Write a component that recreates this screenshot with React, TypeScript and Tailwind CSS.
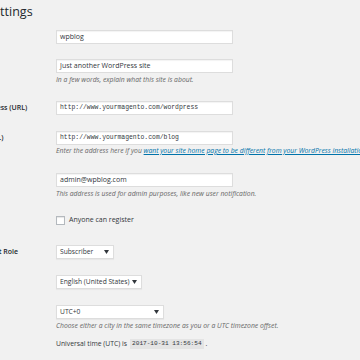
import React from "react";

const font = { fontFamily: '"Open Sans", "Noto Sans", sans-serif' };

function Arrow() {
  return (
    <svg width="5" height="4" viewBox="0 0 5 4" className="shrink-0">
      <path d="M0 0 L5 0 L2.5 4 Z" fill="#32373c" />
    </svg>
  );
}

function Label({ text, h = 14 }: { text: string; h?: number }) {
  return (
    <div
      className="w-[114px] shrink-0 flex items-center text-[7px] font-semibold text-[#23282d] whitespace-nowrap overflow-hidden"
      style={{ height: h }}
    >
      {text}
    </div>
  );
}

function TextInput({ value, mono = false }: { value: string; mono?: boolean }) {
  return (
    <div className="w-[177px] h-[14px] bg-white border border-[#dddddd] shadow-[inset_0_1px_1px_rgba(0,0,0,0.05)] flex items-center pl-[3px] overflow-hidden whitespace-nowrap">
      {mono ? (
        <span className="text-[6.4px] text-[#32373c]" style={{ fontFamily: '"Liberation Mono", "DejaVu Sans Mono", monospace' }}>
          {value}
        </span>
      ) : (
        <span className="text-[7px] text-[#32373c]">{value}</span>
      )}
    </div>
  );
}

function Select({ value, w }: { value: string; w: number }) {
  return (
    <div
      className="h-[14px] bg-white border border-[#dddddd] shadow-[0_1px_1px_rgba(0,0,0,0.04)] flex items-center justify-between pl-[3px] pr-[4px] whitespace-nowrap"
      style={{ width: w }}
    >
      <span className="text-[6.7px] text-[#32373c]">{value}</span>
      <Arrow />
    </div>
  );
}

function Desc({ children, mt = 3 }: { children: React.ReactNode; mt?: number }) {
  return (
    <div className="text-[6.8px] leading-[8px] italic text-[#666666] whitespace-nowrap" style={{ marginTop: mt }}>
      {children}
    </div>
  );
}

export default function App() {
  return (
    <div className="w-[360px] h-[360px] overflow-hidden bg-[#f1f1f1]" style={font}>
      <div className="ml-[-58px] w-[430px]">
        <h1 className="ml-[-5px] pt-[3px] h-[17px] text-[12.5px] leading-[17px] text-[#23282d] whitespace-nowrap">
          General Settings
        </h1>

        <div className="flex mt-[13px]">
          <Label text="Site Title" />
          <TextInput value="wpblog" />
        </div>

        <div className="flex mt-[15px]">
          <Label text="Tagline" />
          <div>
            <TextInput value="Just another WordPress site" />
            <Desc>In a few words, explain what this site is about.</Desc>
          </div>
        </div>

        <div className="flex mt-[17px]">
          <Label text="WordPress Address (URL)" />
          <TextInput value="http://www.yourmagento.com/wordpress" mono />
        </div>

        <div className="flex mt-[16px]">
          <Label text="Site Address (URL)" />
          <div>
            <TextInput value="http://www.yourmagento.com/blog" mono />
            <Desc mt={2}>
              Enter the address here if you{" "}
              <span className="text-[#0073aa] underline">
                want your site home page to be different from your WordPress installation
              </span>
              .
            </Desc>
          </div>
        </div>

        <div className="flex mt-[18px]">
          <Label text="Email Address" />
          <div>
            <TextInput value="admin@wpblog.com" />
            <Desc>This address is used for admin purposes, like new user notification.</Desc>
          </div>
        </div>

        <div className="flex mt-[18px]">
          <Label text="Membership" h={9} />
          <div className="flex items-center h-[9px]">
            <div className="w-[9px] h-[9px] bg-white border border-[#b4b9be] shadow-[inset_0_1px_1px_rgba(0,0,0,0.1)]" />
            <span className="ml-[4px] text-[7px] text-[#32373c]">Anyone can register</span>
          </div>
        </div>

        <div className="flex mt-[20px]">
          <Label text="New User Default Role" />
          <Select value="Subscriber" w={58} />
        </div>

        <div className="flex mt-[16px]">
          <Label text="Site Language" />
          <Select value="English (United States)" w={86} />
        </div>

        <div className="flex mt-[16px]">
          <Label text="Timezone" />
          <div>
            <Select value="UTC+0" w={108} />
            <Desc>Choose either a city in the same timezone as you or a UTC timezone offset.</Desc>
            <div className="mt-[9px] flex items-center h-[10px] text-[6.8px] text-[#32373c] whitespace-nowrap">
              <span>Universal time (UTC) is</span>
              <span
                className="ml-[3px] h-[10px] px-[2px] flex items-center bg-[#e4e4e4] text-[6.1px]"
                style={{ fontFamily: '"Liberation Mono", "DejaVu Sans Mono", monospace' }}
              >
                2017-10-31 13:56:54
              </span>
              <span className="ml-[2px]">.</span>
            </div>
          </div>
        </div>
      </div>
    </div>
  );
}
